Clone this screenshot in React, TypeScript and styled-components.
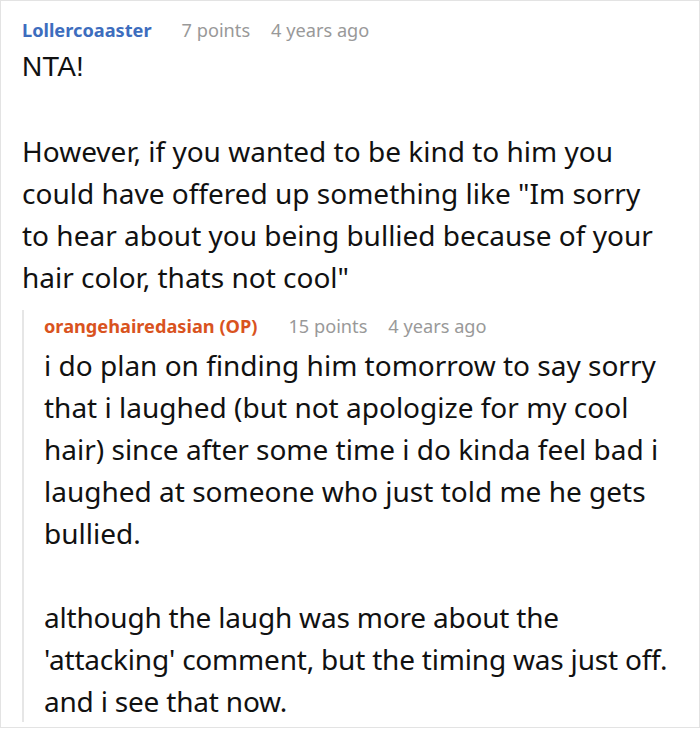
import React from "react"
import styled, { createGlobalStyle } from 'styled-components'

const GlobalStyle = createGlobalStyle`
  body {
    margin: 0;
    background: #fff;
    font-family: "Noto Sans", "Open Sans", sans-serif;
  }`

const StyledCard = styled.div`
    width: 700px;
    height: 728px;
    box-sizing: border-box;
    border: 1px solid #e3e3e3;
    padding: 13px 27px 0 21px;
    overflow: hidden;`

const StyledHeader = styled.div`
    display: flex;
    align-items: baseline;
    font-size: 18.2px;
    line-height: 32px;`

const StyledName = styled.span<{ $color: string }>`
    font-weight: 700;
    color: ${p => p.$color};`

const StyledMeta = styled.span<{ $gap: number }>`
    color: #999;
    margin-left: ${p => p.$gap}px;`

const StyledBody = styled.div`
    font-size: 28px;
    line-height: 42px;
    color: #111;
    p { margin: 0; }
    p + p { margin-top: 42px; }`

const StyledShout = styled.p`
    font-family: "Liberation Sans", Arial, sans-serif;`

const StyledNarrow = styled.p`
    letter-spacing: -0.2px;`

const StyledReply = styled.div`
    margin-top: 12px;
    border-left: 2px solid #e6e6e6;
    padding-left: 20px;
    ${StyledBody} { margin-top: 2px; }`

function App() {
  return (
    <React.Fragment>
      <GlobalStyle />
      <StyledCard>
        <StyledHeader>
          <StyledName $color="#3d6dbe">Lollercoaaster</StyledName>
          <StyledMeta $gap={30}>7 points</StyledMeta>
          <StyledMeta $gap={21}>4 years ago</StyledMeta>
        </StyledHeader>
        <StyledBody>
          <StyledShout>NTA!</StyledShout>
          <p>However, if you wanted to be kind to him you could have offered up something like "Im sorry to hear about you being bullied because of your hair color, thats not cool"</p>
        </StyledBody>
        <StyledReply>
          <StyledHeader>
            <StyledName $color="#d9531e">orangehairedasian (OP)</StyledName>
            <StyledMeta $gap={31}>15 points</StyledMeta>
            <StyledMeta $gap={21}>4 years ago</StyledMeta>
          </StyledHeader>
          <StyledBody>
            <p>i do plan on finding him tomorrow to say sorry that i laughed (but not apologize for my cool hair) since after some time i do kinda feel bad i laughed at someone who just told me he gets bullied.</p>
            <StyledNarrow>although the laugh was more about the 'attacking' comment, but the timing was just off. and i see that now.</StyledNarrow>
          </StyledBody>
        </StyledReply>
      </StyledCard>
    </React.Fragment>
  )
}

export default App
